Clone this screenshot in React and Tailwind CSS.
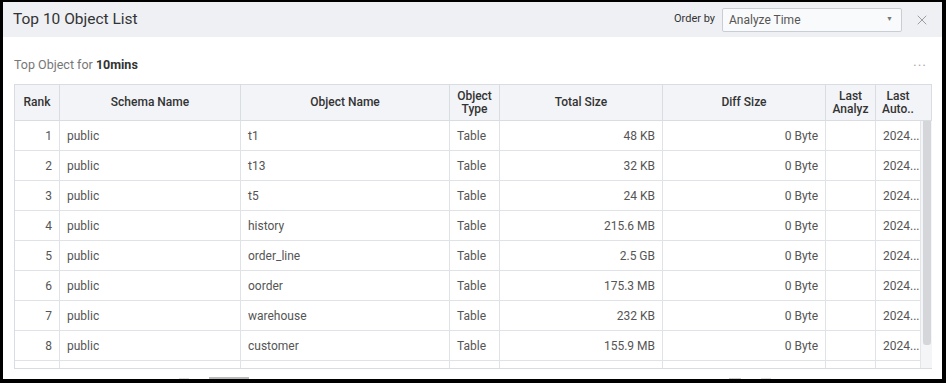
import { X } from 'lucide-react';

const columns = [
  { key: 'rank', label: 'Rank', width: 44, align: 'right' },
  { key: 'schema', label: 'Schema Name', width: 181, align: 'left' },
  { key: 'name', label: 'Object Name', width: 209, align: 'left' },
  { key: 'type', label: ['Object', 'Type'], width: 50, align: 'left' },
  { key: 'total', label: 'Total Size', width: 163, align: 'right' },
  { key: 'diff', label: 'Diff Size', width: 163, align: 'right' },
  { key: 'analyz', label: ['Last', 'Analyz'], width: 50, align: 'left' },
  { key: 'auto', label: ['Last', 'Auto..'], width: 45, align: 'left' },
];

const rows = [
  { id: 1, rank: 1, schema: 'public', name: 't1', type: 'Table', total: '48 KB', diff: '0 Byte', analyz: '', auto: '2024...' },
  { id: 2, rank: 2, schema: 'public', name: 't13', type: 'Table', total: '32 KB', diff: '0 Byte', analyz: '', auto: '2024...' },
  { id: 3, rank: 3, schema: 'public', name: 't5', type: 'Table', total: '24 KB', diff: '0 Byte', analyz: '', auto: '2024...' },
  { id: 4, rank: 4, schema: 'public', name: 'history', type: 'Table', total: '215.6 MB', diff: '0 Byte', analyz: '', auto: '2024...' },
  { id: 5, rank: 5, schema: 'public', name: 'order_line', type: 'Table', total: '2.5 GB', diff: '0 Byte', analyz: '', auto: '2024...' },
  { id: 6, rank: 6, schema: 'public', name: 'oorder', type: 'Table', total: '175.3 MB', diff: '0 Byte', analyz: '', auto: '2024...' },
  { id: 7, rank: 7, schema: 'public', name: 'warehouse', type: 'Table', total: '232 KB', diff: '0 Byte', analyz: '', auto: '2024...' },
  { id: 8, rank: 8, schema: 'public', name: 'customer', type: 'Table', total: '155.9 MB', diff: '0 Byte', analyz: '', auto: '2024...' },
  // next row, only its top edge is visible
  { id: 9, rank: '', schema: '', name: '', type: '', total: '', diff: '', analyz: '', auto: '' },
];

export default function App() {
  return (
    <div
      className="w-[946px] h-[383px] overflow-hidden bg-white border-black border-l-[3px] border-t-2 border-r-[4px] border-b-[4px] flex flex-col"
      style={{ fontFamily: 'Roboto, "Liberation Sans", sans-serif' }}
    >
      {/* Header */}
      <div className="h-[35px] shrink-0 bg-[#eef0f3] flex items-center pl-[10px] pr-[12px]">
        <h1 className="text-[15.5px] text-[#333] font-normal">Top 10 Object List</h1>
        <div className="ml-auto flex items-center">
          <span className="text-[11px] text-[#333] mr-[7px]">Order by</span>
          <div className="w-[180px] h-[24px] bg-[#f9fafb] border border-[#c9ced4] rounded-[2px] flex items-center pl-[6px] pr-[8px]">
            <span className="text-[12px] text-[#555]">Analyze Time</span>
            <span className="ml-auto text-[7px] text-[#777]">▼</span>
          </div>
          <X className="w-[16px] h-[16px] ml-[12px] text-[#888]" strokeWidth={1.2} />
        </div>
      </div>

      {/* Body */}
      <div className="flex-1 min-h-0 flex flex-col pl-[11px] pr-[11px]">
        <div className="h-[47px] shrink-0 flex items-center pt-[10px]">
          <span className="text-[12.5px] text-[#777]">
            Top Object for <span className="font-bold text-[#333]">10mins</span>
          </span>
          <span className="ml-auto mr-[4px] text-[14px] leading-none tracking-[1px] text-[#aaa]">···</span>
        </div>

        <div className="w-[918px] border border-[#d9dde2] border-r-0 flex flex-col">
          {/* Column header */}
          <div className="flex h-[36px] bg-[#f2f4f7] border-b border-[#d9dde2]">
            {columns.map((c, i) => (
              <div
                key={c.key}
                style={{ width: c.width }}
                className={`shrink-0 flex flex-col items-center justify-center text-[12px] leading-[13px] font-medium text-[#333] ${i > 0 ? 'border-l border-[#d9dde2]' : ''}`}
              >
                {Array.isArray(c.label) ? c.label.map((l) => <span key={l}>{l}</span>) : c.label}
              </div>
            ))}
            <div className="flex-1 border-r border-[#d9dde2]" />
          </div>

          {/* Rows */}
          <div className="flex h-[247px] overflow-hidden">
            <div className="flex flex-col">
              {rows.map((r) => (
                <div key={r.id} className="flex h-[30px] shrink-0 border-b border-[#dfe2e6]">
                  {columns.map((c, i) => (
                    <div
                      key={c.key}
                      style={{ width: c.width }}
                      className={`shrink-0 flex items-center text-[12px] text-[#555] px-[7px] ${c.align === 'right' ? 'justify-end' : ''} ${i > 0 ? 'border-l border-[#dfe2e6]' : ''}`}
                    >
                      {r[c.key]}
                    </div>
                  ))}
                </div>
              ))}
            </div>
            {/* Scrollbar */}
            <div className="flex-1 bg-[#f4f5f6] border-l border-[#e3e5e8] flex justify-center">
              <div className="w-[8px] h-[224px] bg-[#d4d6d9] rounded-b-[3px]" />
            </div>
          </div>
        </div>

        <div className="h-[6px] mt-[4px] flex items-end overflow-hidden">
          <span className="ml-[165px] w-[10px] h-[1px] bg-[#ddd]" />
          <span className="ml-[20px] w-[40px] h-[2px] bg-[#bbb]" />
          <span className="ml-[480px] w-[12px] h-[1px] bg-[#ccc]" />
          <span className="ml-[20px] w-[10px] h-[1px] bg-[#ddd]" />
        </div>
      </div>
    </div>
  );
}
